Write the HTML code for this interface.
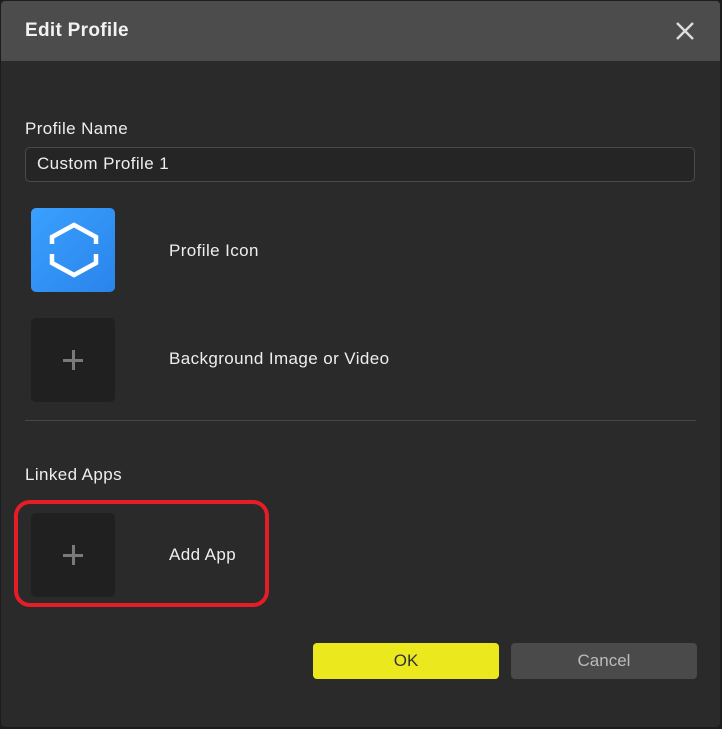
<!DOCTYPE html>
<html><head><style>
body{margin:0;width:722px;height:729px;background:#1c1c1c;font-family:"Liberation Sans",sans-serif;overflow:hidden;position:relative}
.dlg{position:absolute;left:1px;top:1px;width:719px;height:726px;background:#2a2a2a;border-radius:4px;overflow:hidden}
.hdr{position:absolute;left:0;top:0;width:719px;height:60px;background:#4c4c4c}
.t{position:absolute;color:#eee;font-size:17px;letter-spacing:0.4px;white-space:nowrap}
.tile{position:absolute;left:30px;width:84px;height:84px;border-radius:5px;background:#202020}
.plus{position:absolute;left:32px;top:32px;width:20px;height:20px}
.plus:before{content:"";position:absolute;left:9px;top:0;width:3px;height:20px;background:#7a7a7a}
.plus:after{content:"";position:absolute;left:0;top:9px;width:20px;height:3px;background:#7a7a7a}
</style></head><body>
<div class="dlg">
<div class="hdr"></div>
<div class="t" style="left:24px;top:19px;font-size:19px;font-weight:bold;letter-spacing:0.3px;color:#f2f2f2">Edit Profile</div>
<svg style="position:absolute;left:674px;top:20px" width="20" height="20"><path d="M2 2L18 18M18 2L2 18" stroke="#ddd" stroke-width="2.4"/></svg>
<div class="t" style="left:24px;top:118px">Profile Name</div>
<div style="position:absolute;left:24px;top:146px;width:668px;height:33px;border:1.5px solid #4a4a4a;border-radius:5px;background:#252525"></div>
<div class="t" style="left:36px;top:153px">Custom Profile 1</div>
<div class="tile" style="top:207px;background:linear-gradient(135deg,#3aa0ff,#2a84ea)">
<svg width="84" height="84"><path d="M21 36V29L43 17L65 29V36M65 46V55L43 67L21 55V46" fill="none" stroke="#fff" stroke-width="4.5" stroke-linejoin="miter"/></svg></div>
<div class="t" style="left:168px;top:240px">Profile Icon</div>
<div class="tile" style="top:317px"><div class="plus"></div></div>
<div class="t" style="left:168px;top:348px">Background Image or Video</div>
<div style="position:absolute;left:24px;top:419px;width:671px;height:1px;background:#474747"></div>
<div class="t" style="left:24px;top:464px">Linked Apps</div>
<div style="position:absolute;left:13px;top:499px;width:247px;height:99px;border:4px solid #e41d27;border-radius:16px"></div>
<div class="tile" style="top:512px"><div class="plus"></div></div>
<div class="t" style="left:168px;top:544px">Add App</div>
<div style="position:absolute;left:312px;top:642px;width:186px;height:36px;background:#ece81e;border-radius:4px;color:#333;font-size:17px;text-align:center;line-height:36px">OK</div>
<div style="position:absolute;left:510px;top:642px;width:186px;height:36px;background:#4a4a4a;border-radius:4px;color:#bbb;font-size:17px;text-align:center;line-height:36px">Cancel</div>
</div>
</body></html>
